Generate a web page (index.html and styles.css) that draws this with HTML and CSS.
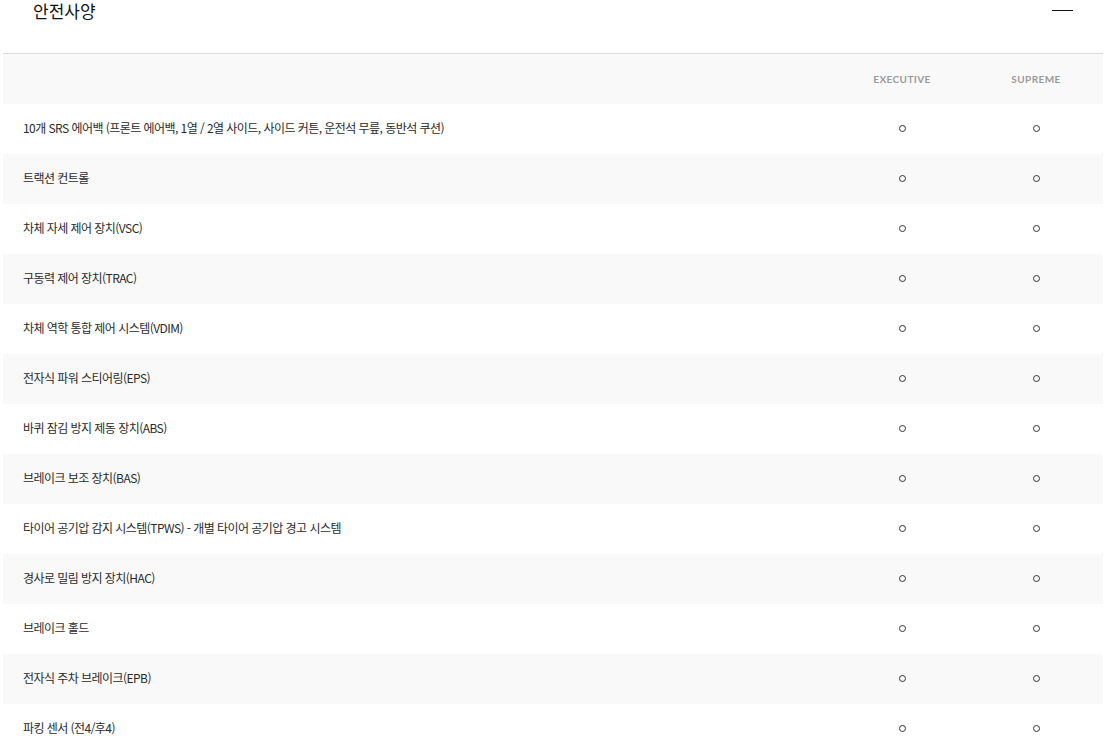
FILE: index.html
```html
<!DOCTYPE html>
<html lang="ko">
<head>
<meta charset="utf-8">
<link rel="stylesheet" href="styles.css">
</head>
<body>
<div class="spec">
  <div class="spec-head">
    <h2 class="spec-title">안전사양</h2>
    <span class="collapse"></span>
  </div>
  <div class="row row-head">
    <div class="label"></div>
    <div class="col col-name">EXECUTIVE</div>
    <div class="col col-name">SUPREME</div>
  </div>
  <div class="row"><div class="label">10개 SRS 에어백 (프론트 에어백, 1열 / 2열 사이드, 사이드 커튼, 운전석 무릎, 동반석 쿠션)</div><div class="col"><span class="dot"></span></div><div class="col"><span class="dot"></span></div></div>
  <div class="row alt"><div class="label">트랙션 컨트롤</div><div class="col"><span class="dot"></span></div><div class="col"><span class="dot"></span></div></div>
  <div class="row"><div class="label">차체 자세 제어 장치(VSC)</div><div class="col"><span class="dot"></span></div><div class="col"><span class="dot"></span></div></div>
  <div class="row alt"><div class="label">구동력 제어 장치(TRAC)</div><div class="col"><span class="dot"></span></div><div class="col"><span class="dot"></span></div></div>
  <div class="row"><div class="label">차체 역학 통합 제어 시스템(VDIM)</div><div class="col"><span class="dot"></span></div><div class="col"><span class="dot"></span></div></div>
  <div class="row alt"><div class="label">전자식 파워 스티어링(EPS)</div><div class="col"><span class="dot"></span></div><div class="col"><span class="dot"></span></div></div>
  <div class="row"><div class="label">바퀴 잠김 방지 제동 장치(ABS)</div><div class="col"><span class="dot"></span></div><div class="col"><span class="dot"></span></div></div>
  <div class="row alt"><div class="label">브레이크 보조 장치(BAS)</div><div class="col"><span class="dot"></span></div><div class="col"><span class="dot"></span></div></div>
  <div class="row"><div class="label">타이어 공기압 감지 시스템(TPWS) - 개별 타이어 공기압 경고 시스템</div><div class="col"><span class="dot"></span></div><div class="col"><span class="dot"></span></div></div>
  <div class="row alt"><div class="label">경사로 밀림 방지 장치(HAC)</div><div class="col"><span class="dot"></span></div><div class="col"><span class="dot"></span></div></div>
  <div class="row"><div class="label">브레이크 홀드</div><div class="col"><span class="dot"></span></div><div class="col"><span class="dot"></span></div></div>
  <div class="row alt"><div class="label">전자식 주차 브레이크(EPB)</div><div class="col"><span class="dot"></span></div><div class="col"><span class="dot"></span></div></div>
  <div class="row"><div class="label">파킹 센서 (전4/후4)</div><div class="col"><span class="dot"></span></div><div class="col"><span class="dot"></span></div></div>
</div>
</body>
</html>
```
FILE: styles.css
```css
html, body {
  margin: 0;
  padding: 0;
  background: #fff;
}
body {
  font-family: "Noto Sans CJK KR", "Noto Sans", sans-serif;
  color: #222;
  overflow: hidden;
}
.spec {
  width: 1100px;
  margin-left: 3px;
}
.spec-head {
  height: 53px;
  border-bottom: 1px solid #d9d9d9;
  display: flex;
  justify-content: space-between;
  align-items: flex-start;
  padding: 0 30px 0 30px;
}
.spec-title {
  margin: 0;
  font-size: 17px;
  font-weight: 400;
  line-height: 22px;
  color: #111;
}
.collapse {
  display: block;
  width: 21px;
  height: 1px;
  background: #111;
  margin-top: 10px;
}
.row {
  display: grid;
  grid-template-columns: 1fr 134px 134px;
  height: 50px;
  align-items: center;
  background: #fff;
}
.row.alt, .row-head {
  background: #f9f9f9;
}
.label {
  padding-left: 20px;
  padding-bottom: 3px;
  font-size: 12px;
  line-height: 16px;
  letter-spacing: -0.55px;
  color: #2a2a2a;
}
.col {
  display: flex;
  justify-content: center;
  align-items: center;
}
.col-name {
  font-family: "Lato", sans-serif;
  font-weight: 700;
  font-size: 10px;
  letter-spacing: 0.4px;
  color: #999;
}
.dot {
  display: block;
  width: 5px;
  height: 5px;
  border: 1.5px solid #333;
  border-radius: 50%;
  margin-bottom: 2px;
}
```
